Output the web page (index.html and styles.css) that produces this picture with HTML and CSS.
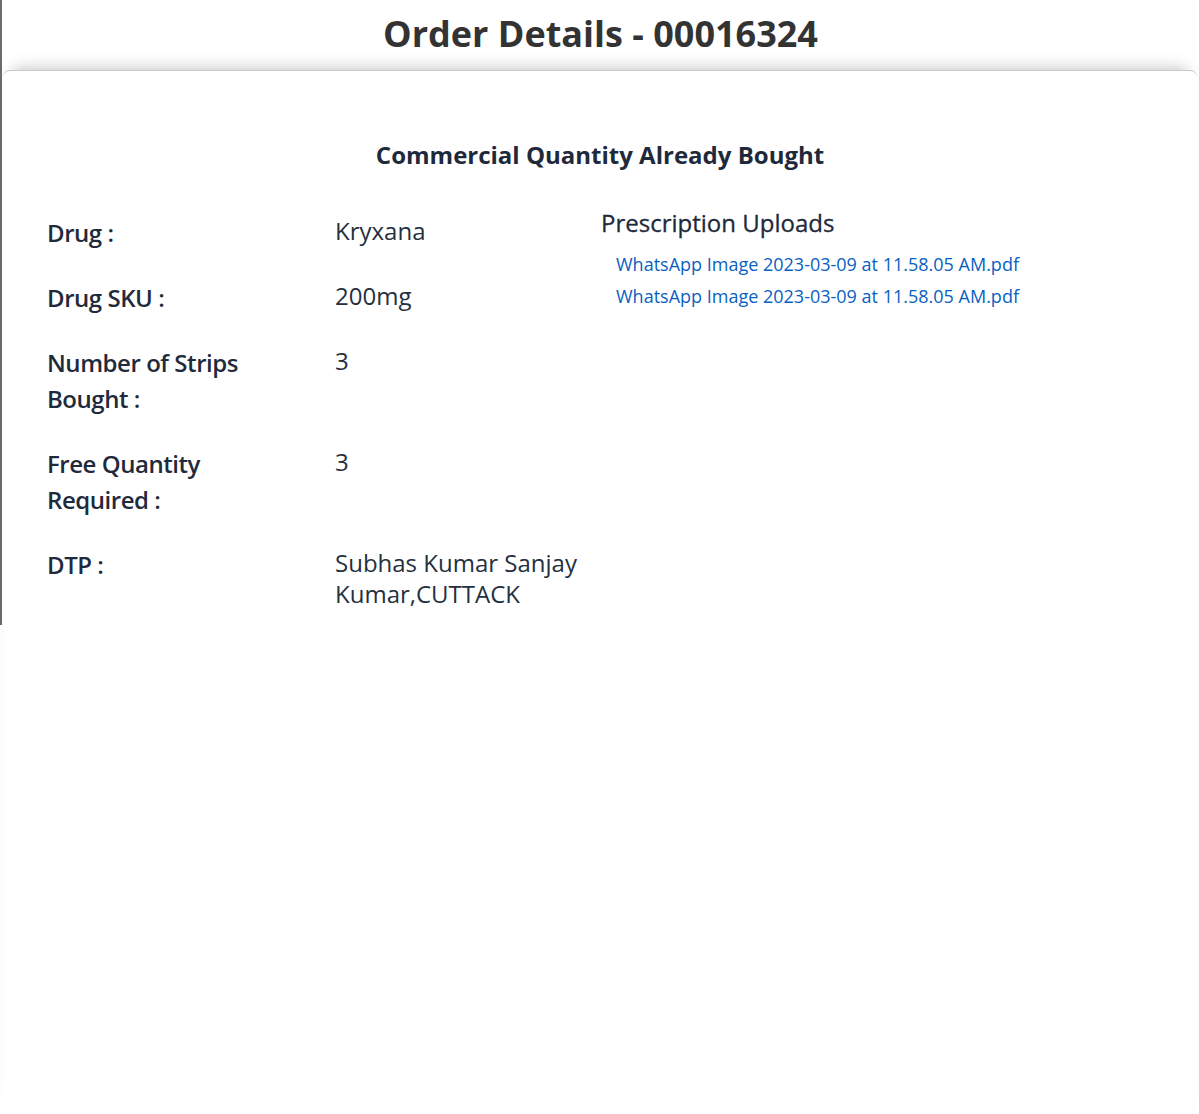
FILE: index.html
```html
<!DOCTYPE html>
<html>
<head>
<meta charset="utf-8">
<link rel="stylesheet" href="styles.css">
</head>
<body>
<div class="page">
  <div class="edge"></div>
  <main class="main">
    <header class="header">
      <h1 class="title">Order Details - 00016324</h1>
    </header>
    <section class="card">
      <h2 class="subtitle">Commercial Quantity Already Bought</h2>
      <div class="columns">
        <div class="details">
          <div class="label">Drug :</div>
          <div class="value">Kryxana</div>
          <div class="label">Drug SKU :</div>
          <div class="value">200mg</div>
          <div class="label">Number of Strips Bought :</div>
          <div class="value">3</div>
          <div class="label">Free Quantity Required :</div>
          <div class="value">3</div>
          <div class="label">DTP :</div>
          <div class="value">Subhas Kumar Sanjay Kumar,CUTTACK</div>
        </div>
        <div class="uploads">
          <h3 class="uploads-title">Prescription Uploads</h3>
          <ul class="files">
            <li><a class="file" href="#">WhatsApp Image 2023-03-09 at 11.58.05 AM.pdf</a></li>
            <li><a class="file" href="#">WhatsApp Image 2023-03-09 at 11.58.05 AM.pdf</a></li>
          </ul>
        </div>
      </div>
    </section>
  </main>
</div>
</body>
</html>
```
FILE: styles.css
```css
html, body {
  margin: 0;
  padding: 0;
  background: #ffffff;
}
body {
  font-family: "Open Sans", "Liberation Sans", sans-serif;
  color: #1e2a3b;
}
.page {
  display: flex;
  align-items: flex-start;
  height: 1114px;
  overflow: hidden;
}
.edge {
  width: 2px;
  height: 625px;
  flex: none;
  background: #6a6d70;
}
.main {
  flex: 1;
  display: flex;
  flex-direction: column;
  height: 1114px;
}
.header {
  height: 70px;
  display: flex;
  justify-content: center;
  align-items: center;
  box-sizing: border-box;
  padding-bottom: 2px;
}
.title {
  margin: 0;
  font-size: 36px;
  font-weight: 700;
  color: #333333;
  line-height: 40px;
}
.card {
  flex: 1;
  margin: 0 2px 0 1px;
  background: #ffffff;
  border-top: 1px solid #c9c9c9;
  border-radius: 7px 7px 0 0;
  box-shadow: 0 -12px 14px -10px rgba(0, 0, 0, 0.22);
  padding: 0 44px;
}
.subtitle {
  margin: 67px 0 0;
  text-align: center;
  font-size: 24px;
  font-weight: 700;
  line-height: 34px;
  color: #1e2a3b;
}
.columns {
  display: grid;
  grid-template-columns: 1fr 1fr;
  margin-top: 43px;
}
.details {
  display: grid;
  grid-template-columns: 288px 1fr;
  row-gap: 29px;
  align-items: start;
}
.label {
  font-size: 24px;
  font-weight: 600;
  line-height: 36px;
  letter-spacing: -0.45px;
  padding-right: 40px;
  color: #1f2b3c;
}
.value {
  font-size: 24px;
  font-weight: 400;
  line-height: 31px;
  color: #25303f;
}
.uploads {
  padding-left: 1px;
}
.uploads-title {
  margin: -10px 0 0;
  font-size: 24px;
  font-weight: 500;
  line-height: 36px;
  color: #1e2a3b;
  -webkit-text-stroke: 0.3px #1e2a3b;
}
.files {
  list-style: none;
  margin: 8px 0 0;
  padding: 0 0 0 15px;
}
.files li {
  line-height: 31px;
}
.file {
  font-size: 18px;
  color: #0a5fc2;
  text-decoration: none;
}
```
